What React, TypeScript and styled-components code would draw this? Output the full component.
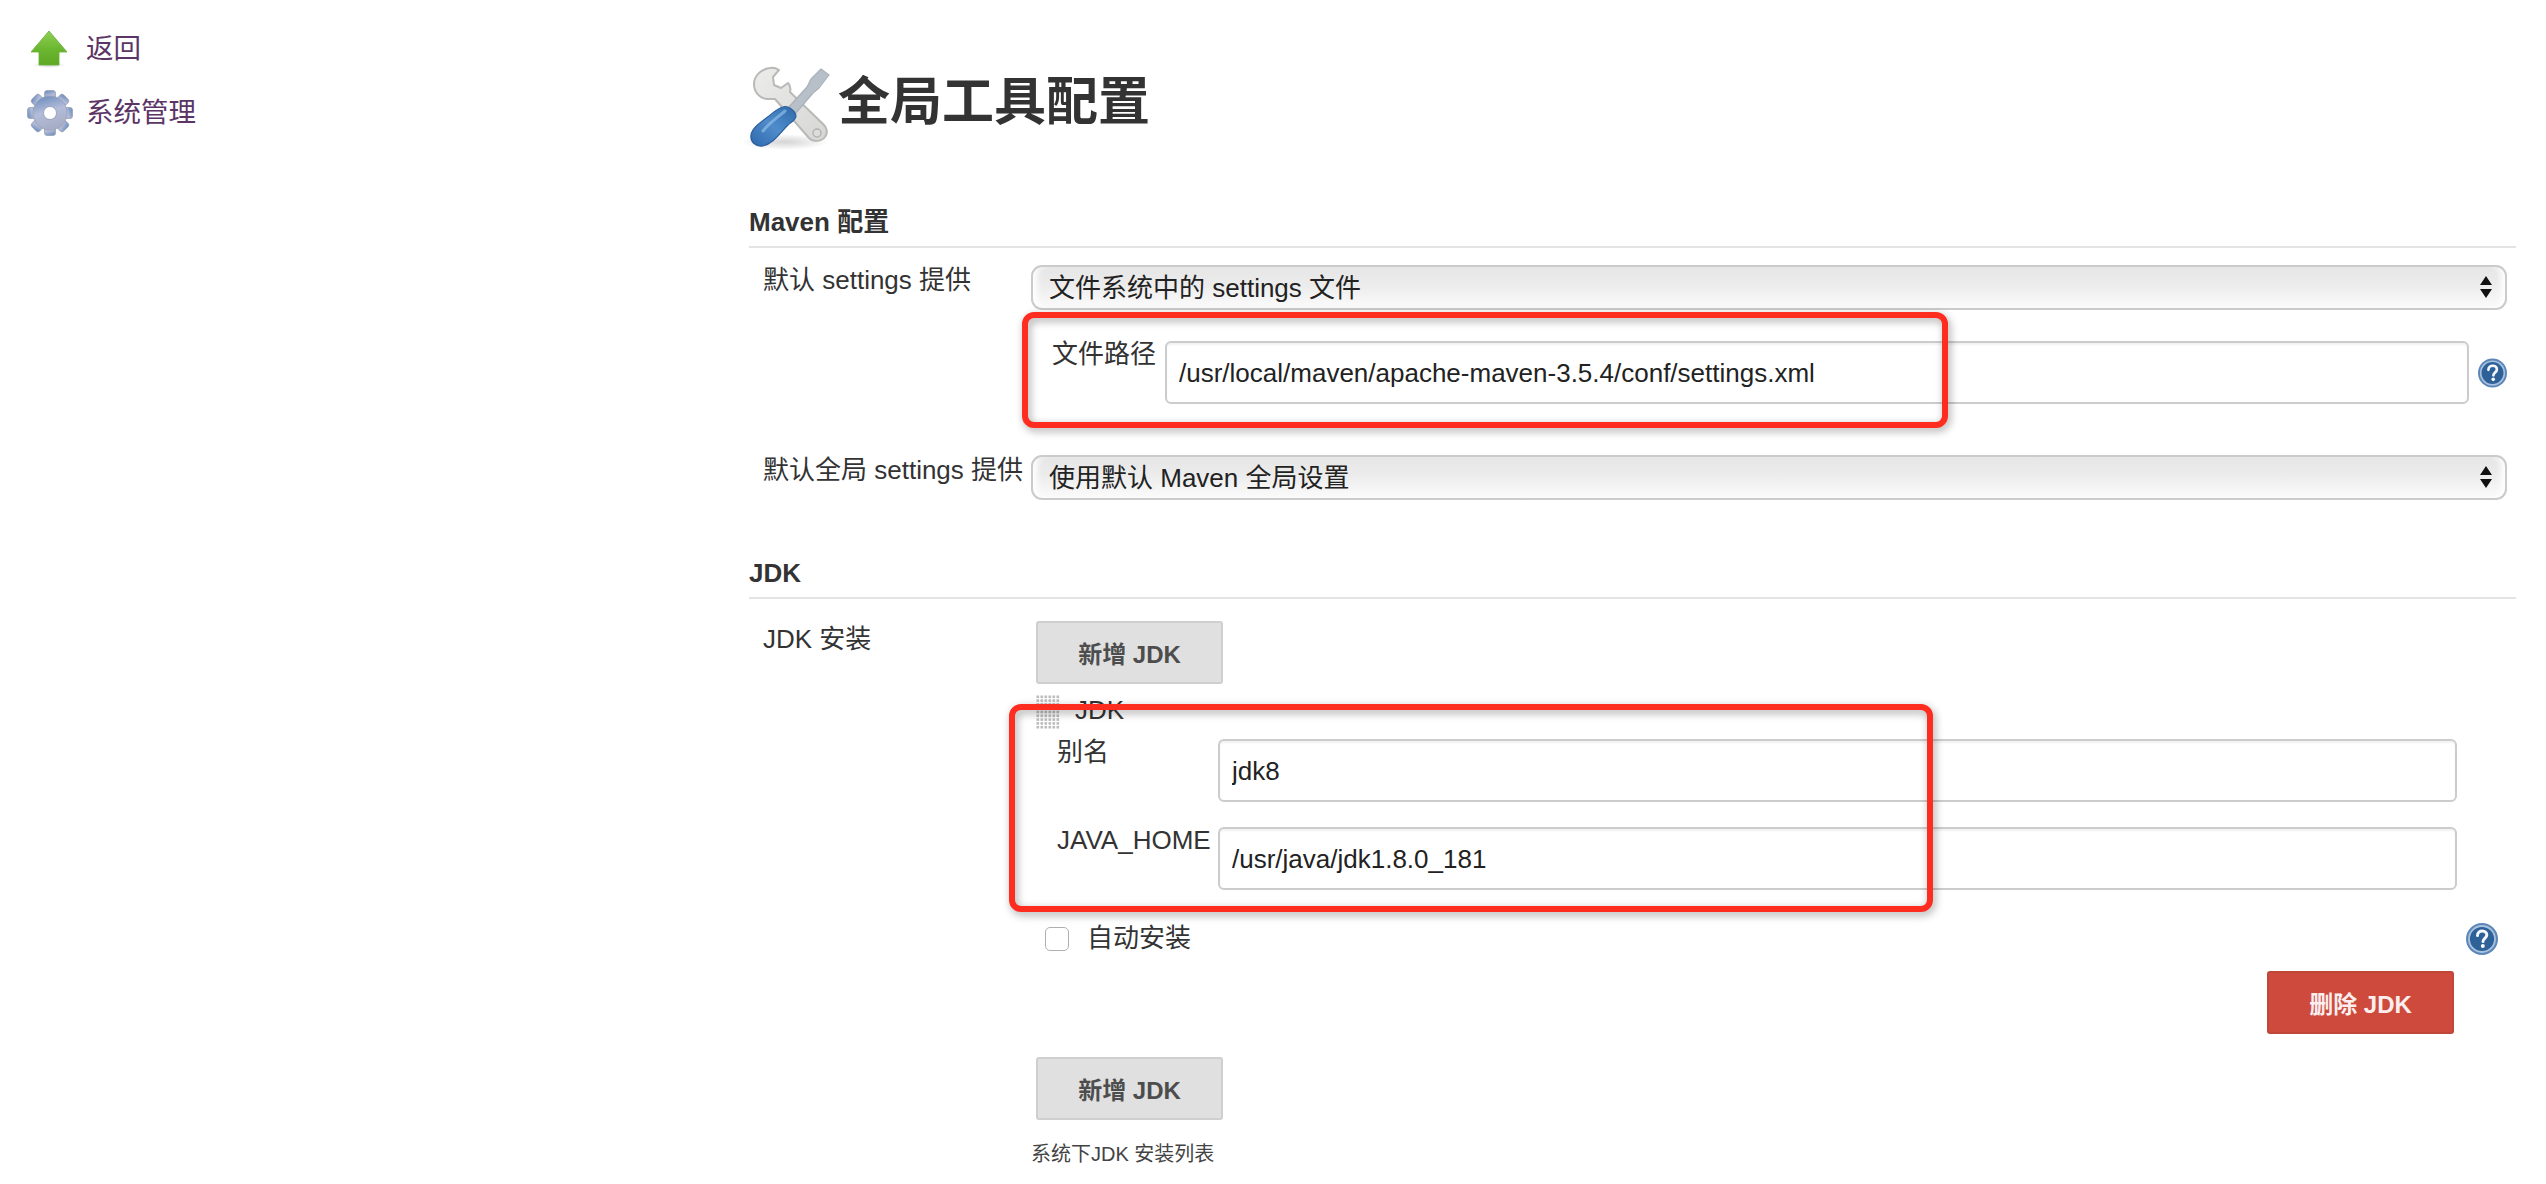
import React from "react";
import styled, { createGlobalStyle } from "styled-components";

const cjk = `"Liberation Sans", "Noto Sans CJK SC", sans-serif`;

const Global = createGlobalStyle`
  html, body { margin: 0; padding: 0; background: #fff; }
  body { font-family: ${cjk}; font-size: 26px; color: #333; }
  * { box-sizing: border-box; }
`;

const Page = styled.div`
  position: relative;
  display: flex;
  width: 2546px;
  height: 1184px;
  overflow: hidden;
`;

const Sidebar = styled.nav`
  width: 749px;
  flex: none;
  padding: 25px 0 0 26px;
  display: flex;
  flex-direction: column;
  gap: 16px;
`;

const SideLink = styled.a`
  display: flex;
  align-items: center;
  height: 48px;
  color: #5c3566;
  font-size: 27.5px;
  line-height: 48px;
`;

const SideIconBox = styled.span<{ $inset?: number }>`
  width: 60px;
  flex: none;
  display: flex;
  align-items: center;
  padding-left: ${(p) => p.$inset ?? 0}px;
`;

const Main = styled.main`
  flex: 1;
  padding: 60px 30px 0 0;
  display: flex;
  flex-direction: column;
`;

const TitleRow = styled.div`
  display: flex;
  align-items: center;
  height: 90px;
  margin-left: -6px;
`;

const Title = styled.h1`
  margin: 0 0 6px 5px;
  font-size: 52px;
  line-height: 60px;
  font-weight: 700;
  color: #333;
`;

const SectionHead = styled.div<{ $top: number }>`
  margin-top: ${(p) => p.$top}px;
  height: 43px;
  line-height: 34px;
  font-size: 26px;
  font-weight: 700;
  color: #333;
  border-bottom: 2px solid #e4e4e4;
`;

const FormRow = styled.div<{ $top: number }>`
  margin-top: ${(p) => p.$top}px;
  display: grid;
  grid-template-columns: 282px 1fr;
  padding-right: 9px;
`;

const Label = styled.label<{ $drop?: number }>`
  padding-left: 14px;
  padding-top: ${(p) => p.$drop ?? 0}px;
  line-height: 30px;
  font-size: 26px;
  color: #333;
  white-space: nowrap;
`;

const SelectBox = styled.div`
  position: relative;
  height: 45px;
`;

const NativeSelect = styled.select`
  appearance: none;
  display: block;
  width: 100%;
  height: 100%;
  padding: 0 40px 0 16px;
  border: 2px solid #cbcbcb;
  border-radius: 11px;
  font-family: ${cjk};
  font-size: 26px;
  color: #222;
  background: linear-gradient(#e6e6e6 0%, #ececec 45%, #fbfbfb 100%);
  box-shadow: inset 9px 0 6px -5px #fff, inset -9px 0 6px -5px #fff;
`;

const SelectArrows = styled.svg`
  position: absolute;
  top: 11px;
  right: 15px;
  width: 12px;
  height: 22px;
  pointer-events: none;
`;

const SubRow = styled.div<{ $top: number; $labelLeft: number; $labelWidth: number; $tail: number }>`
  margin-top: ${(p) => p.$top}px;
  display: grid;
  grid-template-columns: ${(p) => p.$labelWidth}px 1fr ${(p) => p.$tail}px;
  padding-left: ${(p) => p.$labelLeft}px;
  align-items: start;
`;

const SubLabel = styled.label`
  line-height: 27px;
  font-size: 26px;
  color: #333;
  white-space: nowrap;
`;

const TextInput = styled.input`
  display: block;
  width: 100%;
  height: 63px;
  padding: 1px 12px 0;
  border: 2px solid #cccccc;
  border-radius: 6px;
  background: #fff;
  box-shadow: inset 0 2px 2px #f2f2f2;
  font-family: ${cjk};
  font-size: 26px;
  color: #222;
  outline: none;
`;

const HelpWrap = styled.span`
  display: flex;
  padding-left: 9px;
  align-self: center;
`;

const FieldColumn = styled.div`
  display: flex;
  flex-direction: column;
  min-width: 0;
`;

const Button = styled.button<{ $danger?: boolean }>`
  display: block;
  width: 187px;
  height: 63px;
  padding: 0;
  border: 2px solid ${(p) => (p.$danger ? "#c0463a" : "#cfcfcf")};
  border-radius: 3px;
  background: ${(p) => (p.$danger ? "#cd4a3d" : "#e0e0e0")};
  color: ${(p) => (p.$danger ? "#fbeeee" : "#4d4d4d")};
  font-family: ${cjk};
  font-size: 24px;
  font-weight: 700;
`;

const AddWrap = styled.div<{ $top: number }>`
  margin-top: ${(p) => p.$top}px;
  padding-left: 5px;
`;

const RepeatHead = styled.div`
  margin-top: 11px;
  margin-left: 5px;
  height: 34px;
  display: flex;
  align-items: center;
  gap: 15px;
  font-size: 26px;
  color: #333;
`;

const RepeatName = styled.span`
  line-height: 30px;
  padding-bottom: 4px;
`;

const CheckRow = styled.div`
  margin-top: 33px;
  height: 32px;
  display: flex;
  align-items: center;
  padding-left: 14px;
  padding-right: 9px;
  font-size: 26px;
  color: #333;
`;

const CheckBox = styled.input`
  appearance: none;
  width: 24px;
  height: 24px;
  margin: 0 18px 0 0;
  border: 1.5px solid #b0b0b0;
  border-radius: 5px;
  background: #fff;
`;

const CheckText = styled.span`
  flex: 1;
  padding-bottom: 7px;
`;

const DeleteRow = styled.div`
  margin-top: 16px;
  padding-right: 53px;
  display: flex;
  justify-content: flex-end;
`;

const Caption = styled.div`
  margin-top: 20px;
  font-size: 20px;
  line-height: 28px;
  color: #444;
`;

const Annotation = styled.div<{ $x: number; $y: number; $w: number; $h: number }>`
  position: absolute;
  left: ${(p) => p.$x}px;
  top: ${(p) => p.$y}px;
  width: ${(p) => p.$w}px;
  height: ${(p) => p.$h}px;
  border: 6px solid #ff2d1f;
  border-radius: 12px;
  filter: drop-shadow(2px 3px 4px rgba(0, 0, 0, 0.35));
  pointer-events: none;
`;

const ArrowIcon = () => (
  <svg width="38" height="38" viewBox="0 0 38 38">
    <defs>
      <linearGradient id="arrowFill" x1="0" y1="0" x2="0" y2="1">
        <stop offset="0" stopColor="#8fcf55" />
        <stop offset="0.55" stopColor="#6ab62f" />
        <stop offset="1" stopColor="#5fa926" />
      </linearGradient>
      <radialGradient id="arrowShadow">
        <stop offset="0" stopColor="#000" stopOpacity="0.18" />
        <stop offset="1" stopColor="#000" stopOpacity="0" />
      </radialGradient>
    </defs>
    <ellipse cx="19" cy="35" rx="17" ry="3" fill="url(#arrowShadow)" />
    <path d="M19 1 L37 22 H29 V35 H9 V22 H1 Z" fill="url(#arrowFill)" stroke="#69b033" strokeWidth="0.8" strokeLinejoin="round" />
  </svg>
);

const GearIcon = () => {
  const teeth = [0, 45, 90, 135, 180, 225, 270, 315];
  return (
    <svg width="48" height="48" viewBox="0 0 48 48">
      <defs>
        <linearGradient id="gearFill" x1="0.3" y1="0" x2="0.6" y2="1">
          <stop offset="0" stopColor="#6f8fbe" />
          <stop offset="0.45" stopColor="#b3bcd9" />
          <stop offset="1" stopColor="#a5acc4" />
        </linearGradient>
      </defs>
      <g fill="url(#gearFill)" stroke="#9aa2b8" strokeWidth="0.8">
        {teeth.map((a) => (
          <rect key={a} x="18.5" y="1.5" width="11" height="12" rx="2.5" transform={`rotate(${a} 24 24)`} />
        ))}
        <circle cx="24" cy="24" r="17" />
      </g>
      <circle cx="24" cy="24" r="6.5" fill="#fff" stroke="#8f99b5" strokeWidth="0.8" />
    </svg>
  );
};

const ToolsIcon = () => (
  <svg width="90" height="90" viewBox="0 0 90 90">
    <defs>
      <linearGradient id="metal" x1="0" y1="0" x2="1" y2="1">
        <stop offset="0" stopColor="#ececea" />
        <stop offset="1" stopColor="#d6d6d4" />
      </linearGradient>
      <linearGradient id="handle" x1="0" y1="1" x2="1" y2="0">
        <stop offset="0" stopColor="#2f68ad" />
        <stop offset="0.5" stopColor="#4f8ccb" />
        <stop offset="1" stopColor="#2f69ab" />
      </linearGradient>
      <radialGradient id="toolShadow">
        <stop offset="0" stopColor="#000" stopOpacity="0.17" />
        <stop offset="1" stopColor="#000" stopOpacity="0" />
      </radialGradient>
    </defs>
    <ellipse cx="42" cy="82" rx="44" ry="8" fill="url(#toolShadow)" />
    <path
      d="M27 8 C18 9 11 16 11 24 C11 32 16 38 24 39 L32 39 L66 78 C70 82 78 82 82 77 C85 73 84 68 81 65 L47 32 C48 28 47 25 45 23 L38 28 L31 25 L30 17 L36 10 C33 8 30 7.5 27 8 Z"
      fill="url(#metal)"
      stroke="#b9b9b7"
      strokeWidth="2"
      strokeLinejoin="round"
    />
    <circle cx="74" cy="73" r="4" fill="#dcdcda" stroke="#b3b3b1" strokeWidth="1.5" />
    <path d="M78 9 L86 15 L76 28 L70 33 L52 54 L45 48 L64 27 L68 19 Z" fill="#b7c0c9" stroke="#a9b1b9" strokeWidth="1.2" strokeLinejoin="round" />
    <path
      d="M40 47 C44 45 52 50 53 56 C53 60 48 62 44 66 C37 73 30 84 20 86 C13 87 7 82 8 75 C9 68 18 62 26 56 C31 52 35 48 40 47 Z"
      fill="url(#handle)"
      stroke="#2c5f9e"
      strokeWidth="1.2"
    />
    <path d="M42 51 C36 56 26 63 20 71" fill="none" stroke="#8fbce6" strokeWidth="3" strokeLinecap="round" opacity="0.7" />
  </svg>
);

const HelpIcon = () => (
  <svg width="32" height="32" viewBox="0 0 32 32">
    <circle cx="16" cy="16" r="16" fill="#5d86b8" />
    <circle cx="16" cy="16" r="13" fill="#2f6199" stroke="#a9c3de" strokeWidth="1.8" />
    <path d="M11.5 12.5 C11.5 9.5 13.8 8 16.3 8 C19 8 20.8 9.8 20.8 12 C20.8 15.2 17 15.6 17 18.5" fill="none" stroke="#f4f7fb" strokeWidth="3" strokeLinecap="round" />
    <circle cx="16.8" cy="23" r="2" fill="#f4f7fb" />
  </svg>
);

const HandleIcon = () => {
  const cells: React.ReactNode[] = [];
  for (let r = 0; r < 9; r++) {
    for (let c = 0; c < 6; c++) {
      cells.push(<rect key={`${r}-${c}`} x={c * 4 + 0.5} y={r * 3.8 + 0.5} width="2.6" height="2.6" fill="#bdbdbd" />);
    }
  }
  return (
    <svg width="24" height="34" viewBox="0 0 24 34">
      {cells}
    </svg>
  );
};

const UpDown = () => (
  <SelectArrows viewBox="0 0 12 22">
    <path d="M6 0 L12 9 H0 Z M0 13 H12 L6 22 Z" fill="#111" />
  </SelectArrows>
);

export default function App() {
  return (
    <Page>
      <Global />
      <Sidebar>
        <SideLink>
          <SideIconBox $inset={4}>
            <ArrowIcon />
          </SideIconBox>
          返回
        </SideLink>
        <SideLink>
          <SideIconBox>
            <GearIcon />
          </SideIconBox>
          系统管理
        </SideLink>
      </Sidebar>
      <Main>
        <TitleRow>
          <ToolsIcon />
          <Title>全局工具配置</Title>
        </TitleRow>

        <SectionHead $top={55}>Maven 配置</SectionHead>
        <FormRow $top={17}>
          <Label>默认 settings 提供</Label>
          <SelectBox>
            <NativeSelect defaultValue="file">
              <option value="file">文件系统中的 settings 文件</option>
            </NativeSelect>
            <UpDown />
          </SelectBox>
        </FormRow>
        <FormRow $top={31}>
          <span />
          <SubRow $top={0} $labelLeft={21} $labelWidth={113} $tail={38}>
            <SubLabel>文件路径</SubLabel>
            <TextInput readOnly defaultValue="/usr/local/maven/apache-maven-3.5.4/conf/settings.xml" />
            <HelpWrap>
              <HelpIcon />
            </HelpWrap>
          </SubRow>
        </FormRow>
        <FormRow $top={51}>
          <Label>默认全局 settings 提供</Label>
          <SelectBox>
            <NativeSelect defaultValue="default">
              <option value="default">使用默认 Maven 全局设置</option>
            </NativeSelect>
            <UpDown />
          </SelectBox>
        </FormRow>

        <SectionHead $top={56}>JDK</SectionHead>
        <FormRow $top={22}>
          <Label $drop={3}>JDK 安装</Label>
          <FieldColumn>
            <AddWrap $top={0}>
              <Button>新增 JDK</Button>
            </AddWrap>
            <RepeatHead>
              <HandleIcon />
              <RepeatName>JDK</RepeatName>
            </RepeatHead>
            <SubRow $top={10} $labelLeft={26} $labelWidth={161} $tail={50}>
              <SubLabel>别名</SubLabel>
              <TextInput readOnly defaultValue="jdk8" />
              <span />
            </SubRow>
            <SubRow $top={25} $labelLeft={26} $labelWidth={161} $tail={50}>
              <SubLabel>JAVA_HOME</SubLabel>
              <TextInput readOnly defaultValue="/usr/java/jdk1.8.0_181" />
              <span />
            </SubRow>
            <CheckRow>
              <CheckBox type="checkbox" />
              <CheckText>自动安装</CheckText>
              <HelpIcon />
            </CheckRow>
            <DeleteRow>
              <Button $danger>删除 JDK</Button>
            </DeleteRow>
            <AddWrap $top={23}>
              <Button>新增 JDK</Button>
            </AddWrap>
            <Caption>系统下JDK 安装列表</Caption>
          </FieldColumn>
        </FormRow>
      </Main>
      <Annotation $x={1022} $y={312} $w={926} $h={116} />
      <Annotation $x={1009} $y={704} $w={924} $h={208} />
    </Page>
  );
}
